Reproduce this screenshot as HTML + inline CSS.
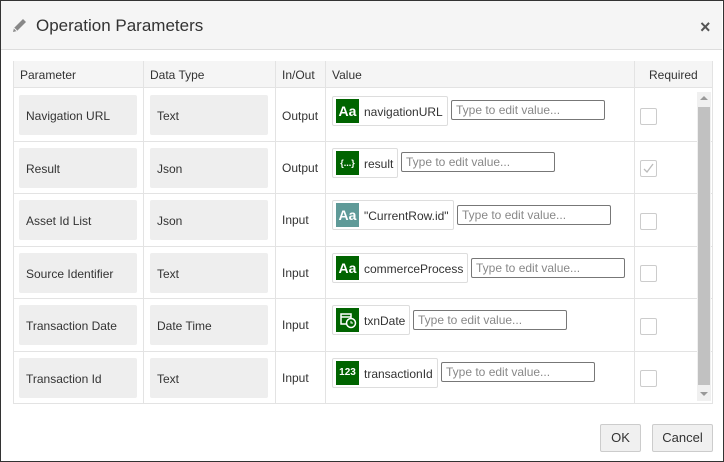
<!DOCTYPE html><html><head><style>
*{box-sizing:border-box;margin:0;padding:0}
body{width:724px;height:462px;background:#fff;font-family:"Liberation Sans",Arial,sans-serif;font-size:12px;color:#333;position:relative;overflow:hidden}
.dlg{position:absolute;left:0;top:0;width:724px;height:462px;border:1px solid #333;background:#fff}
.hdr{position:absolute;left:1px;top:1px;width:721px;height:49px;background:#f5f5f5;border-bottom:1px solid #ddd}
.t{position:absolute;left:36px;top:16px;font-size:17px;color:#333}
.x{position:absolute;left:700px;top:17px;font-size:18px;color:#555;font-weight:bold}
.tbl{position:absolute;left:13px;top:61px;width:700px;height:343px;border:1px solid #e3e3e3}
.th{position:absolute;top:61px;height:27px;background:#f5f5f5;border-bottom:1px solid #e3e3e3}
.h{position:absolute;top:68px;font-size:12px;color:#333}
.vl{position:absolute;top:61px;width:1px;height:343px;background:#e3e3e3}
.hl{position:absolute;left:13px;width:700px;height:1px;background:#e3e3e3}
.g{position:absolute;height:40px;background:#eee;border-radius:2px;padding:14px 0 0 7px}
.io{position:absolute;left:282px}
.chip{position:absolute;left:332px;height:30px;border:1px solid #ddd;border-radius:2px;padding:2px 4px 0 3px;display:flex;align-items:center;white-space:nowrap}
.ic{width:23px;height:24px;background:#006400;color:#fff;font-weight:bold;font-size:14px;text-align:center;line-height:24px;margin-right:5px;flex:none;margin-top:-2px}
.in{position:absolute;height:20px;border:1px solid #777;border-radius:2px;padding:2px 4px;color:#888;width:154px}
.cb{position:absolute;left:640px;width:17px;height:17px;border:1px solid #ccc;border-radius:2px}
.btn{position:absolute;top:424px;height:28px;border:1px solid #ccc;background:#f0f0f0;border-radius:2px;font-size:13px;text-align:center;line-height:26px;color:#333}
</style></head><body><div class="dlg"></div>
<div class="hdr"></div>
<svg style="position:absolute;left:11px;top:17px" width="17" height="17" viewBox="0 0 17 17"><path d="M2 15 L3 11 L12 2 L15 5 L6 14 Z" fill="#888"/><path d="M3 11 L6 14" stroke="#f5f5f5" stroke-width="1"/></svg>
<div class="t">Operation Parameters</div><div class="x">×</div>
<div class="tbl"></div>
<div class="th" style="left:14px;width:698px"></div>
<div class="h" style="left:20px">Parameter</div><div class="h" style="left:150px">Data Type</div><div class="h" style="left:282px">In/Out</div><div class="h" style="left:332px">Value</div><div class="h" style="left:649px">Required</div>
<div class="vl" style="left:143px"></div><div class="vl" style="left:275px"></div><div class="vl" style="left:325px"></div><div class="vl" style="left:634px"></div>
<div class="hl" style="top:141px"></div><div class="hl" style="top:193px"></div><div class="hl" style="top:246px"></div><div class="hl" style="top:298px"></div><div class="hl" style="top:351px"></div>
<div style="position:absolute;left:697px;top:92px;width:14px;height:309px;background:#f0f0f0"></div>
<div style="position:absolute;left:698px;top:107px;width:12px;height:278px;background:#c1c1c1"></div>
<div style="position:absolute;left:700px;top:96px;border:4px solid transparent;border-bottom-color:#999;border-top:0"></div>
<div style="position:absolute;left:700px;top:392px;border:4px solid transparent;border-top-color:#999;border-bottom:0"></div>

<div class="g" style="left:19px;top:95px;width:118px">Navigation URL</div><div class="g" style="left:150px;top:95px;width:118px">Text</div><div class="io" style="top:109px">Output</div>
<div class="chip" style="top:96px"><div class="ic">Aa</div>navigationURL</div><div class="in" style="left:451px;top:100px">Type to edit value...</div><div class="cb" style="top:108px"></div>

<div class="g" style="left:19px;top:148px;width:118px">Result</div><div class="g" style="left:150px;top:148px;width:118px">Json</div><div class="io" style="top:161px">Output</div>
<div class="chip" style="top:148px"><div class="ic" style="font-size:9px">{...}</div>result</div><div class="in" style="left:401px;top:152px">Type to edit value...</div><div class="cb" style="top:160px"><svg width="15" height="15" style="position:absolute;left:0;top:0"><path d="M3 8 L6 11 L12 3" stroke="#bbb" stroke-width="1.3" fill="none"/></svg></div>

<div class="g" style="left:19px;top:200px;width:118px">Asset Id List</div><div class="g" style="left:150px;top:200px;width:118px">Json</div><div class="io" style="top:213px">Input</div>
<div class="chip" style="top:200px"><div class="ic" style="background:#5f9a98">Aa</div>"CurrentRow.id"</div><div class="in" style="left:457px;top:205px">Type to edit value...</div><div class="cb" style="top:213px"></div>

<div class="g" style="left:19px;top:253px;width:118px">Source Identifier</div><div class="g" style="left:150px;top:253px;width:118px">Text</div><div class="io" style="top:266px">Input</div>
<div class="chip" style="top:253px"><div class="ic">Aa</div>commerceProcess</div><div class="in" style="left:471px;top:258px">Type to edit value...</div><div class="cb" style="top:265px"></div>

<div class="g" style="left:19px;top:305px;width:118px">Transaction Date</div><div class="g" style="left:150px;top:305px;width:118px">Date Time</div><div class="io" style="top:318px">Input</div>
<div class="chip" style="top:305px"><div class="ic"><svg width="23" height="24" viewBox="0 0 23 24"><rect x="5" y="6" width="10" height="10" fill="none" stroke="#fff" stroke-width="1.5"/><line x1="5" y1="9" x2="15" y2="9" stroke="#fff" stroke-width="1.5"/><circle cx="15" cy="15" r="4.5" fill="#006400" stroke="#fff" stroke-width="1.5"/><path d="M15 13 V15 H17" stroke="#fff" stroke-width="1" fill="none"/></svg></div>txnDate</div><div class="in" style="left:413px;top:310px">Type to edit value...</div><div class="cb" style="top:318px"></div>

<div class="g" style="left:19px;top:358px;width:118px">Transaction Id</div><div class="g" style="left:150px;top:358px;width:118px">Text</div><div class="io" style="top:371px">Input</div>
<div class="chip" style="top:358px"><div class="ic" style="font-size:10px">123</div>transactionId</div><div class="in" style="left:441px;top:362px">Type to edit value...</div><div class="cb" style="top:370px"></div>

<div class="btn" style="left:600px;width:41px">OK</div><div class="btn" style="left:652px;width:61px">Cancel</div>
</body></html>
